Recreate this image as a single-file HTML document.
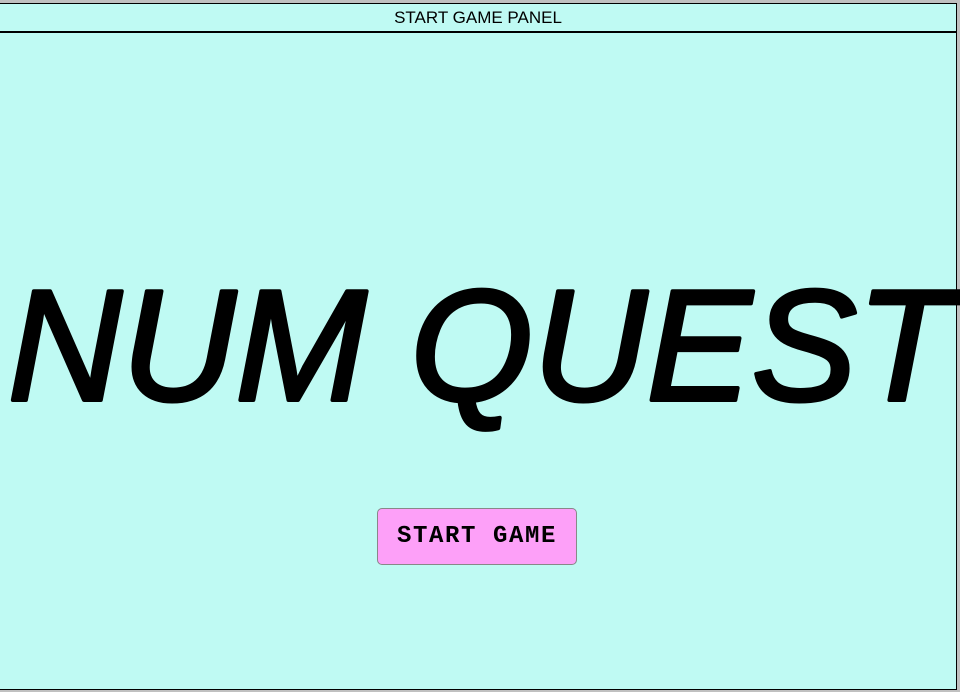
<!DOCTYPE html>
<html><head><style>
html,body{margin:0;padding:0;width:960px;height:692px;overflow:hidden;background:#c0c0c0;}
.panel{position:absolute;left:0;top:3px;width:957px;height:687px;background:#bffaf3;border-top:1px solid #000;border-right:1px solid #000;border-bottom:1px solid #000;box-sizing:border-box;}
.hdr{position:absolute;left:0;top:0;width:100%;height:27px;border-bottom:2px solid #000;font:17px "Liberation Sans",sans-serif;text-align:center;line-height:28px;color:#000;}
.btn{position:absolute;left:377px;top:504px;width:200px;height:57px;box-sizing:border-box;background:#fda0f8;border:1px solid #888;border-radius:5px;font:bold 24px "Liberation Mono",monospace;letter-spacing:1.6px;text-align:center;line-height:55px;color:#000;}
svg{position:absolute;left:0;top:0;}
</style></head><body>
<div class="panel">
<div class="hdr">START GAME PANEL</div>
<div class="btn">START GAME</div>
</div>
<svg width="960" height="692"><text x="8" y="400" font-family="Liberation Sans" font-style="italic" font-size="158" fill="#000" stroke="#000" stroke-width="4" stroke-linejoin="round" textLength="945" lengthAdjust="spacingAndGlyphs">NUM QUEST</text></svg>
</body></html>
